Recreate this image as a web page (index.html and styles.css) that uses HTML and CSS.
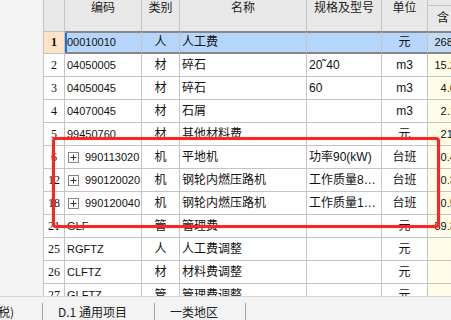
FILE: index.html
```html
<!DOCTYPE html>
<html lang="zh-CN">
<head>
    <meta charset="UTF-8">
    <meta name="viewport" content="width=device-width, initial-scale=1.0">
    <title>人材机汇总</title>
    <link rel="stylesheet" href="styles.css">
</head>
<body>
<div class="app">
    <div class="main">
        <div class="side"></div>
        <div class="grid">
            <table class="sheet">
                <colgroup>
                    <col class="c-no"><col class="c-code"><col class="c-type"><col class="c-name"><col class="c-spec"><col class="c-unit"><col class="c-qty">
                </colgroup>
                <thead>
                    <tr>
                        <th class="no"><div class="h"></div></th>
                        <th><div class="h">编码</div></th>
                        <th><div class="h">类别</div></th>
                        <th><div class="h">名称</div></th>
                        <th><div class="h">规格及型号</div></th>
                        <th><div class="h">单位</div></th>
                        <th class="qty"><div class="group"></div><div class="sub">含</div></th>
                    </tr>
                </thead>
                <tbody>
                    <tr class="sel">
                        <td class="no"><b>1</b></td><td class="code">00010010</td><td class="type">人</td><td>人工费</td><td></td><td class="unit">元</td><td class="qty">268.8</td>
                    </tr>
                    <tr>
                        <td class="no">2</td><td class="code">04050005</td><td class="type">材</td><td>碎石</td><td>20˜40</td><td class="unit">m3</td><td class="qty">15.26</td>
                    </tr>
                    <tr>
                        <td class="no">3</td><td class="code">04050045</td><td class="type">材</td><td>碎石</td><td>60</td><td class="unit">m3</td><td class="qty">4.63</td>
                    </tr>
                    <tr>
                        <td class="no">4</td><td class="code">04070045</td><td class="type">材</td><td>石屑</td><td></td><td class="unit">m3</td><td class="qty">2.10</td>
                    </tr>
                    <tr>
                        <td class="no">5</td><td class="code">99450760</td><td class="type">材</td><td>其他材料费</td><td></td><td class="unit">元</td><td class="qty">21.5</td>
                    </tr>
                    <tr>
                        <td class="no">6</td>
                        <td class="code"><svg class="toggle" width="11" height="11" viewBox="0 0 11 11"><rect x="0.5" y="0.5" width="10" height="10" fill="#fff" stroke="#858585"/><path d="M2.5 5.5h6M5.5 2.5v6" stroke="#333"/></svg>990113020</td>
                        <td class="type">机</td><td>平地机</td><td>功率90(kW)</td><td class="unit">台班</td><td class="qty">0.45</td>
                    </tr>
                    <tr>
                        <td class="no">12</td>
                        <td class="code"><svg class="toggle" width="11" height="11" viewBox="0 0 11 11"><rect x="0.5" y="0.5" width="10" height="10" fill="#fff" stroke="#858585"/><path d="M2.5 5.5h6M5.5 2.5v6" stroke="#333"/></svg>990120020</td>
                        <td class="type">机</td><td>钢轮内燃压路机</td><td>工作质量8…</td><td class="unit">台班</td><td class="qty">0.38</td>
                    </tr>
                    <tr>
                        <td class="no">18</td>
                        <td class="code"><svg class="toggle" width="11" height="11" viewBox="0 0 11 11"><rect x="0.5" y="0.5" width="10" height="10" fill="#fff" stroke="#858585"/><path d="M2.5 5.5h6M5.5 2.5v6" stroke="#333"/></svg>990120040</td>
                        <td class="type">机</td><td>钢轮内燃压路机</td><td>工作质量1…</td><td class="unit">台班</td><td class="qty">0.52</td>
                    </tr>
                    <tr>
                        <td class="no">21</td><td class="code">GLF</td><td class="type">管</td><td>管理费</td><td></td><td class="unit">元</td><td class="qty">59.37</td>
                    </tr>
                    <tr>
                        <td class="no">25</td><td class="code">RGFTZ</td><td class="type">人</td><td>人工费调整</td><td></td><td class="unit">元</td><td class="qty"></td>
                    </tr>
                    <tr>
                        <td class="no">26</td><td class="code">CLFTZ</td><td class="type">材</td><td>材料费调整</td><td></td><td class="unit">元</td><td class="qty"></td>
                    </tr>
                    <tr>
                        <td class="no">27</td><td class="code">GLFTZ</td><td class="type">管</td><td>管理费调整</td><td></td><td class="unit">元</td><td class="qty"></td>
                    </tr>
                </tbody>
            </table>
        </div>
    </div>
    <div class="tabs">
        <div class="tab cut">(不含税)</div>
        <div class="tab">D.1 通用项目</div>
        <div class="tab">一类地区</div>
    </div>
    <div class="mark"></div>
</div>
</body>
</html>
```

FILE: styles.css
```css
html, body {
    margin: 0;
    padding: 0;
}
body {
    font-family: "Liberation Sans", "Noto Sans CJK SC", sans-serif;
    font-size: 12px;
    color: #111;
    background: #f3f3f3;
    overflow: hidden;
}
.app {
    position: relative;
    width: 451px;
    height: 320px;
    overflow: hidden;
}
.main {
    display: flex;
    height: 296px;
}
.side {
    width: 43px;
    flex-shrink: 0;
    background: #f3f3f3;
}
.grid {
    flex: 1;
    overflow: hidden;
    background: #fff;
}
.sheet {
    table-layout: fixed;
    width: 421px;
    border-collapse: separate;
    border-spacing: 0;
}
.c-no { width: 22px; }
.c-code { width: 77px; }
.c-type { width: 38px; }
.c-name { width: 127px; }
.c-spec { width: 75px; }
.c-unit { width: 46px; }
.c-qty { width: 36px; }

.sheet th {
    padding: 0;
    background: #e8e8e8;
    border-right: 1px solid #c4c4c4;
    font-weight: normal;
    color: #222;
    vertical-align: top;
}
.sheet th.no {
    border-left: 1px solid #c4c4c4;
}
.sheet th .h {
    height: 31px;
    box-sizing: border-box;
    padding-top: 1px;
    line-height: 14px;
    text-align: center;
}
.sheet th.qty {
    border-right: none;
    text-align: left;
}
.sheet th .group {
    height: 5px;
    border-bottom: 1px solid #c4c4c4;
}
.sheet th .sub {
    height: 25px;
    line-height: 25px;
    padding-left: 9px;
}

.sheet td {
    padding: 0 2px;
    line-height: 22px;
    border-right: 1px solid #c4c4c4;
    border-bottom: 1px solid #c4c4c4;
    white-space: nowrap;
    overflow: hidden;
    background: #fff;
}
.sheet td.no {
    border-left: 1px solid #c4c4c4;
    padding: 0;
    text-align: center;
    font-family: "Liberation Serif", serif;
    font-size: 12px;
}
.sheet td.code {
    font-size: 11px;
}
.sheet td.type,
.sheet td.unit {
    text-align: center;
}
.sheet td.qty {
    border-right: none;
    background: #fffde8;
    text-align: right;
    font-size: 11px;
}
.toggle {
    vertical-align: -2px;
    margin: 0 6px 0 1px;
}

.sheet tr.sel td {
    line-height: 19px;
    background: #b5d5fb;
    border-top: 2px solid #878787;
    border-bottom: 2px solid #878787;
}
.sheet tr.sel td.no {
    background: #fde4c4;
    border-top: 1px solid #c4c4c4;
    border-bottom: 1px solid #c4c4c4;
}
.sheet tr.sel td.code {
    box-shadow: inset 2px 0 0 #1e6fe6;
}
.sheet tr.sel td.qty {
    background: #c2daf3;
}

.tabs {
    height: 24px;
    box-sizing: border-box;
    border-top: 1px solid #d8d8d8;
    background: #f3f3f3;
    display: flex;
    align-items: flex-end;
    font-family: "Noto Sans CJK SC", sans-serif;
    font-size: 12px;
    color: #222;
}
.tab {
    height: 17px;
    line-height: 17px;
    padding: 0 27px 0 15px;
    border-right: 1px solid #a8a8a8;
    white-space: nowrap;
}
.tab.cut {
    width: 43px;
    box-sizing: border-box;
    padding: 0 28px 0 0;
    display: flex;
    justify-content: flex-end;
    overflow: hidden;
}

.mark {
    position: absolute;
    left: 52px;
    top: 137px;
    width: 388px;
    height: 91px;
    box-sizing: border-box;
    border: 3px solid #ff2424;
    border-radius: 4px;
    box-shadow: 0 0 1px rgba(255, 40, 40, 0.6);
    pointer-events: none;
}
```
